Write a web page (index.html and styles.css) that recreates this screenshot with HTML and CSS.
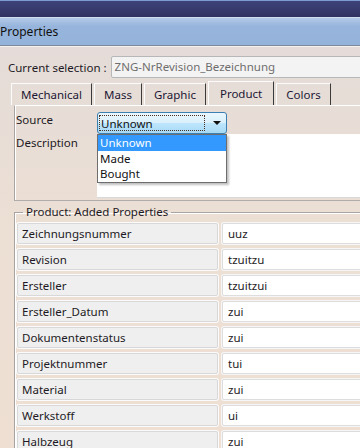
FILE: index.html
```html
<!DOCTYPE html>
<html lang="en">
<head>
  <meta charset="UTF-8">
  <title>Properties</title>
  <link rel="stylesheet" href="styles.css">
</head>
<body>

  <div class="frame-top"></div>
  <div class="titlebar">Properties</div>

  <div class="dialog">
    <div class="selection">
      <span class="selection-label">Current selection :</span>
      <div class="selection-field">ZNG-NrRevision_Bezeichnung</div>
    </div>

    <div class="tabs">
      <div class="tab">Mechanical</div>
      <div class="tab">Mass</div>
      <div class="tab">Graphic</div>
      <div class="tab active">Product</div>
      <div class="tab">Colors</div>
    </div>

    <div class="tab-panel">
      <div class="form-row">
        <span class="form-label">Source</span>
        <div class="combo">
          <span class="combo-value">Unknown</span>
          <span class="combo-arrow"></span>
          <ul class="combo-list">
            <li class="selected">Unknown</li>
            <li>Made</li>
            <li>Bought</li>
          </ul>
        </div>
      </div>
      <div class="form-row">
        <span class="form-label">Description</span>
        <div class="description"></div>
      </div>
    </div>

    <fieldset class="group">
      <legend>Product: Added Properties</legend>
      <div class="prop"><div class="prop-name">Zeichnungsnummer</div><div class="prop-value">uuz</div></div>
      <div class="prop"><div class="prop-name">Revision</div><div class="prop-value">tzuitzu</div></div>
      <div class="prop"><div class="prop-name">Ersteller</div><div class="prop-value">tzuitzui</div></div>
      <div class="prop"><div class="prop-name">Ersteller_Datum</div><div class="prop-value">zui</div></div>
      <div class="prop"><div class="prop-name">Dokumentenstatus</div><div class="prop-value">zui</div></div>
      <div class="prop"><div class="prop-name">Projektnummer</div><div class="prop-value">tui</div></div>
      <div class="prop"><div class="prop-name">Material</div><div class="prop-value">zui</div></div>
      <div class="prop"><div class="prop-name">Werkstoff</div><div class="prop-value">ui</div></div>
      <div class="prop"><div class="prop-name">Halbzeug</div><div class="prop-value">zui</div></div>
    </fieldset>
  </div>

</body>
</html>
```

FILE: styles.css
```css
body {
  margin: 0;
  width: 360px;
  height: 448px;
  overflow: hidden;
  font-family: 'Noto Sans', sans-serif;
  font-size: 11.5px;
  color: #1e1a24;
  background: linear-gradient(#e2dbd9, #ecdfd4 50%, #eedfd2);
}

.frame-top {
  height: 16px;
  background: linear-gradient(#3e4378, #2f3262);
  border-top: 1px solid #7d9bd0;
}

.titlebar {
  height: 27px;
  line-height: 27px;
  font-size: 12px;
  background: linear-gradient(#b3c9e7, #97b5dc 30%, #94b3db);
  border-top: 1px solid #cfdcee;
  border-bottom: 1px solid #7e8a9c;
  color: #111;
}

.dialog {
  width: 420px;
  border-top: 1px solid #f4f1f0;
}

/* current selection */
.selection {
  display: flex;
  align-items: center;
  gap: 4px;
  padding: 9px 0 0 8px;
}

.selection-field {
  flex: 1;
  height: 20px;
  line-height: 20px;
  padding-left: 3px;
  background: #f4f3f3;
  border: 1px solid #b7b7b7;
  border-radius: 2px;
  color: #6e6e6e;
}

/* tabs */
.tabs {
  display: flex;
  gap: 2px;
  padding: 4px 0 0 11px;
  height: 23px;
  align-items: flex-end;
}

.tab {
  height: 21px;
  line-height: 21px;
  padding: 0 9px;
  border-top: 1px solid #fbfbfb;
  border-left: 1px solid #fbfbfb;
  border-right: 1px solid #3a3a3a;
  color: #1c1734;
}

.tab.active {
  height: 23px;
  line-height: 23px;
  padding: 0 11px;
}

.tab-panel {
  margin-left: 14px;
  border-top: 1px solid #ffffff;
  border-left: 1px solid #a8a4a4;
  box-shadow: inset 1px 0 0 #ffffff;
  padding: 6px 0 2px 1px;
  border-bottom: 1px solid #b0acab;
}

.form-row {
  display: flex;
}

.form-label {
  width: 81px;
  line-height: 16px;
}

.form-row:last-child .form-label {
  padding-top: 1px;
}

/* combo box */
.combo {
  position: relative;
  width: 128px;
  height: 20px;
  border: 1px solid #3c7fb1;
  border-radius: 3px;
  background: linear-gradient(#eaf6fd, #d9f0fc 50%, #bee6fd 51%, #a7d9f5);
  display: flex;
  align-items: center;
}

.combo-value {
  margin-left: 1px;
  width: 106px;
  height: 16px;
  line-height: 16px;
  border: 1px dotted #4a3020;
  box-sizing: border-box;
  padding-left: 1px;
  color: #111;
}

.combo-arrow {
  margin-left: 8px;
  width: 0;
  height: 0;
  border-left: 4px solid transparent;
  border-right: 4px solid transparent;
  border-top: 4px solid #111;
}

.combo-list {
  position: absolute;
  z-index: 2;
  left: -1px;
  top: 21px;
  width: 128px;
  margin: 0;
  padding: 0 0 1px;
  list-style: none;
  background: #fff;
  border: 1px solid #6e6e6e;
  box-shadow: 2px 2px 2px rgba(0, 0, 0, 0.25);
}

.combo-list li {
  height: 15px;
  line-height: 15px;
  padding-left: 2px;
  color: #111;
}

.combo-list li.selected {
  height: 16px;
  line-height: 16px;
  background-color: #3399ff;
  color: #fff;
}

.description {
  flex: 1;
  height: 63px;
  background: #fff;
  border-bottom: 1px solid #d8d8d8;
}

/* added properties group */
.group {
  margin: 4px 0 0 14px;
  padding: 4px 0 0 2px;
  border: none;
  border-top: 1px solid #a8a4a4;
  border-left: 1px solid #a8a4a4;
  box-shadow: inset 1px 1px 0 #ffffff;
}

.group legend {
  margin-left: 6px;
  padding: 0 3px;
  line-height: 14px;
}

.prop {
  display: flex;
  gap: 4px;
  margin-bottom: 5px;
}

.prop-name {
  width: 195px;
  height: 19px;
  line-height: 19px;
  padding-left: 4px;
  background: #efefef;
  border: 1px solid #d8d8d8;
  box-shadow: 0 0 0 1px #fbfbfb;
  border-radius: 2px;
}

.prop-value {
  flex: 1;
  height: 19px;
  line-height: 19px;
  padding-left: 5px;
  background: #fff;
  border: 1px solid #dddddd;
  box-shadow: 0 0 0 1px #f6f6f6;
  border-radius: 2px;
}
```
